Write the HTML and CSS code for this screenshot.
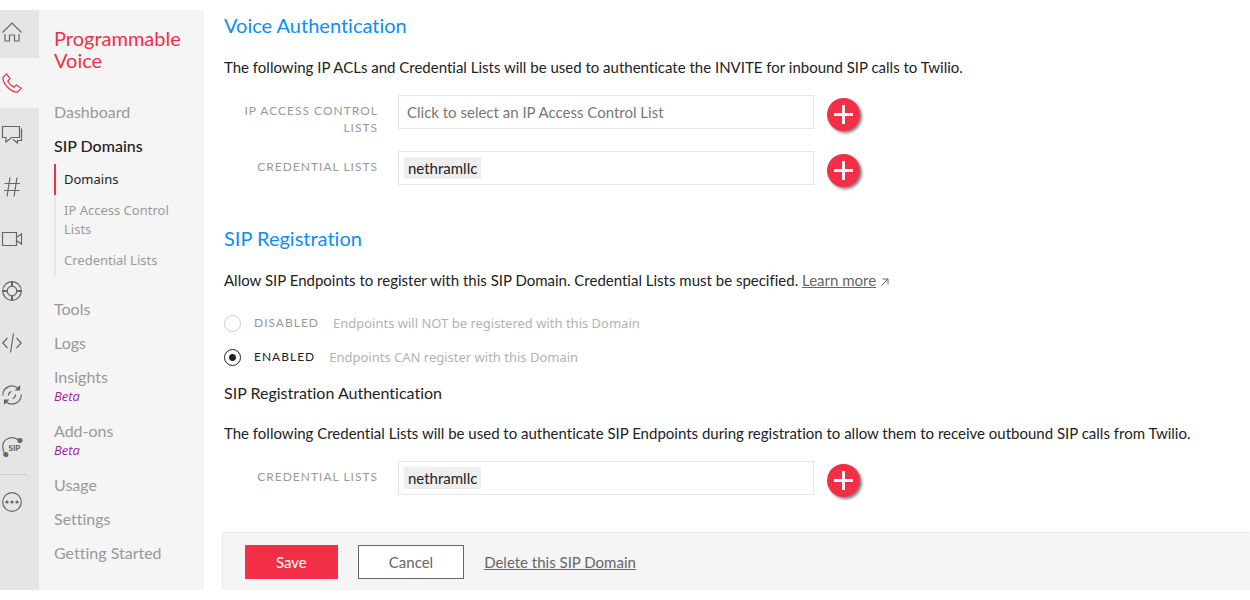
FILE: index.html
```html
<!DOCTYPE html>
<html lang="en">

<head>
    <meta charset="UTF-8">
    <meta name="viewport" content="width=device-width, initial-scale=1.0">
    <title>SIP Domains</title>
    <link rel="stylesheet" href="styles.css">
</head>

<body>
    <div class="container">
        <nav class="rail" aria-label="Products">
            <a href="#" class="home" aria-label="Home">
                <svg viewBox="0 0 20 20"><path d="M.5 10.500 10 1l9.500 9.500M3 12v7h4.500v-6h5v6H17v-7" /></svg>
            </a>
            <a href="#" class="active" aria-label="Programmable Voice">
                <svg viewBox="0 0 20 20"><path d="M4.500.8.800 4.500C1 11 8.500 19 15.500 19.200l3.700-3.900-4.800-3.300-2.600 2.200C9.500 13 7 10.500 5.800 8.200L8 5.600z" /></svg>
            </a>
            <a href="#" aria-label="Chat">
                <svg viewBox="0 0 20 20"><path d="M.5 1.500h17v11H9.500L4 17v-4.500H.5zM19.500 3.500v12h-4v2.500l-4.500-3.500" /></svg>
            </a>
            <a href="#" aria-label="Phone Numbers">
                <svg viewBox="0 0 20 20"><path d="M8 .5 5 19.500M15 .5l-3 19M2.500 6.500H18M2 13.500h15.500" /></svg>
            </a>
            <a href="#" aria-label="Video">
                <svg viewBox="0 0 20 20"><path d="M.5 3.500h14v13H.5zM14.500 8.500l5-3.500v10l-5-3.500" /></svg>
            </a>
            <a href="#" aria-label="Support">
                <svg viewBox="0 0 20 20"><circle cx="10" cy="10" r="9.300" /><circle cx="10" cy="10" r="4.800" /><path class="thick" d="M10 .7v4.500M10 14.800v4.500M.7 10h4.500M14.800 10h4.500" /></svg>
            </a>
            <a href="#" aria-label="Developer Tools">
                <svg viewBox="0 0 20 20"><path d="M5.500 5 .8 10l4.700 5M14.500 5l4.700 5-4.700 5M11.500.5l-3 19" /></svg>
            </a>
            <a href="#" aria-label="Sync">
                <svg viewBox="0 0 20 20">
                    <path d="M.8 10.500A9.200 9.200 0 0 1 16 3.200M19.200 9.500A9.200 9.200 0 0 1 4 16.800M6.500 10.500C6.500 8.500 7.500 7 9.500 6.500M13.500 9.500c0 2-1 3.500-3 4" />
                    <path class="fill" d="M17.500 1.500v3.500H14zM2.500 18.500V15H6z" />
                </svg>
            </a>
            <a href="#" aria-label="SIP Trunking">
                <svg viewBox="0 0 20 20">
                    <path d="M17.500 3.500C10-2.500.5 2 .7 10c0 3 1.300 5.500 3 7.300" />
                    <circle class="fill" cx="18" cy="3.500" r="2" />
                    <circle class="fill" cx="3.800" cy="17.500" r="2" />
                    <text x="6.500" y="14">SIP</text>
                </svg>
            </a>
            <hr>
            <a href="#" aria-label="All Products">
                <svg viewBox="0 0 20 20"><circle cx="10" cy="10" r="9.300" /><circle class="fill" cx="5" cy="10" r="1" /><circle class="fill" cx="10" cy="10" r="1" /><circle class="fill" cx="15" cy="10" r="1" /></svg>
            </a>
        </nav>

        <nav class="sidebar" aria-label="Programmable Voice">
            <h1>Programmable Voice</h1>
            <ul>
                <li><a href="#">Dashboard</a></li>
                <li>
                    <a href="#" class="current">SIP Domains</a>
                    <ul class="sub">
                        <li class="on"><a href="#">Domains</a></li>
                        <li><a href="#">IP Access Control Lists</a></li>
                        <li><a href="#">Credential Lists</a></li>
                    </ul>
                </li>
                <li><a href="#">Tools</a></li>
                <li><a href="#">Logs</a></li>
                <li><a href="#">Insights</a><em>Beta</em></li>
                <li><a href="#">Add-ons</a><em>Beta</em></li>
                <li><a href="#">Usage</a></li>
                <li><a href="#">Settings</a></li>
                <li><a href="#">Getting Started</a></li>
            </ul>
        </nav>

        <main>
            <form>
                <section>
                    <h2>Voice Authentication</h2>
                    <p>The following IP ACLs and Credential Lists will be used to authenticate the INVITE for inbound SIP calls to Twilio.</p>
                    <div class="row">
                        <label for="acl">IP Access Control Lists</label>
                        <div class="field"><input type="text" id="acl" placeholder="Click to select an IP Access Control List"></div>
                        <button type="button" class="add" aria-label="Add IP access control list"><svg viewBox="0 0 20 20"><path d="M10 0v20M0 10h20" /></svg></button>
                    </div>
                    <div class="row">
                        <label for="voiceCred">Credential Lists</label>
                        <div class="field"><span class="tag">nethramllc</span><input type="text" id="voiceCred"></div>
                        <button type="button" class="add" aria-label="Add credential list"><svg viewBox="0 0 20 20"><path d="M10 0v20M0 10h20" /></svg></button>
                    </div>
                </section>

                <section>
                    <h2>SIP Registration</h2>
                    <p>Allow SIP Endpoints to register with this SIP Domain. Credential Lists must be specified. <a href="#">Learn more</a> <svg class="ext" viewBox="0 0 8 8"><path d="M.5 7.500 7 1M1.500 1H7v5.500" /></svg></p>
                    <div class="radios">
                        <div class="radio">
                            <input type="radio" name="registration" id="disabled">
                            <label for="disabled">Disabled</label>
                            <span>Endpoints will NOT be registered with this Domain</span>
                        </div>
                        <div class="radio">
                            <input type="radio" name="registration" id="enabled" checked>
                            <label for="enabled">Enabled</label>
                            <span>Endpoints CAN register with this Domain</span>
                        </div>
                    </div>
                    <h3>SIP Registration Authentication</h3>
                    <p>The following Credential Lists will be used to authenticate SIP Endpoints during registration to allow them to receive outbound SIP calls from Twilio.</p>
                    <div class="row">
                        <label for="regCred">Credential Lists</label>
                        <div class="field"><span class="tag">nethramllc</span><input type="text" id="regCred"></div>
                        <button type="button" class="add" aria-label="Add credential list"><svg viewBox="0 0 20 20"><path d="M10 0v20M0 10h20" /></svg></button>
                    </div>
                </section>

                <div class="actions">
                    <button type="submit" class="save">Save</button>
                    <button type="button" class="cancel">Cancel</button>
                    <a href="#">Delete this SIP Domain</a>
                </div>
            </form>
        </main>
    </div>
</body>

</html>
```
FILE: styles.css
```css
* {
    box-sizing: border-box;
}

body {
    margin: 0;
    padding: 10px 0;
    font-family: Lato, "Open Sans", sans-serif;
    font-size: 15px;
    line-height: 20px;
    font-variant-ligatures: none;
    color: #222;
    background-color: #fff;
}

h1,
h2,
h3,
p,
ul {
    margin: 0;
    padding: 0;
    font-weight: 400;
}

ul {
    list-style: none;
}

input,
button {
    font: inherit;
}

.container {
    display: flex;
    min-height: calc(100vh - 20px);
}

/* icon rail */
.rail {
    flex: none;
    width: 39px;
    background-color: #e5e5e5;
}

.rail a {
    display: flex;
    align-items: center;
    height: 52px;
    padding-left: 2px;
    color: #666;
}

.rail .home {
    height: 48px;
    padding-bottom: 4px;
}

.rail .active {
    height: 50px;
    margin-bottom: 1px;
    color: #f22f46;
    background-color: #f5f5f5;
}

.rail hr {
    width: 27px;
    height: 1px;
    margin: 1px 0;
    border: 0;
    background-color: #ccc;
}

.rail svg {
    width: 20px;
    height: 20px;
    fill: none;
    stroke: currentColor;
    stroke-width: 1.2;
    overflow: visible;
}

.rail .thick {
    stroke-width: 2;
}

.rail .fill {
    fill: currentColor;
}

.rail text {
    font-size: 8px;
    font-weight: 900;
    fill: currentColor;
    stroke: none;
}

/* product menu */
.sidebar {
    flex: none;
    width: 165px;
    padding: 17px 15px;
    background-color: #f5f5f5;
}

.sidebar h1 {
    margin-bottom: 24px;
    font-size: 20px;
    line-height: 22px;
    color: #f22f46;
}

.sidebar a {
    display: block;
    font-size: 16px;
    line-height: 34px;
    text-decoration: none;
    color: #999;
}

.sidebar .current {
    font-weight: 500;
    color: #222;
}

.sidebar em {
    display: block;
    margin-top: -8px;
    padding-bottom: 8px;
    font-family: "Open Sans", sans-serif;
    font-size: 13px;
    font-weight: 500;
    color: #a120a8;
}

.sub {
    margin: 1px 0 16px;
}

.sub li {
    padding: 6px 0 6px 8px;
    border-left: 2px solid #e5e5e5;
}

.sub .on {
    border-color: #f22f46;
}

.sidebar .sub a {
    font-family: "Noto Sans", sans-serif;
    font-size: 13px;
    line-height: 19px;
}

.sidebar .on a {
    color: #222;
}

/* form */
main {
    flex: 1;
    min-width: 0;
    padding-left: 20px;
}

h2 {
    margin-bottom: 17px;
    font-size: 20px;
    line-height: 30px;
    color: #0d8dfa;
}

h3 {
    margin-bottom: 20px;
    font-size: 16px;
}

p {
    margin-bottom: 18px;
}

p a,
.actions a {
    color: #666;
}

.ext {
    width: 8px;
    height: 8px;
    margin-left: 1px;
    fill: none;
    stroke: #666;
}

section {
    margin-bottom: 38px;
}

.row {
    display: flex;
    align-items: flex-start;
    height: 34px;
}

.row + .row {
    margin-top: 22px;
}

.row label {
    width: 154px;
    margin-right: 20px;
    padding-top: 7px;
    font-size: 12px;
    line-height: 17px;
    letter-spacing: 1px;
    text-align: right;
    text-transform: uppercase;
    color: #999;
}

.field {
    display: flex;
    align-items: center;
    gap: 4px;
    width: 416px;
    height: 34px;
    padding: 0 5px;
    border: 1px solid #e5e5e5;
}

.field input {
    flex: 1;
    min-width: 0;
    padding: 0 3px;
    border: 0;
    outline: 0;
}

.field input::placeholder {
    color: #777;
}

.tag {
    padding: 1px 4px;
    background-color: #eee;
}

.add {
    display: flex;
    align-items: center;
    justify-content: center;
    width: 33px;
    height: 33px;
    margin: 3px 0 0 13px;
    padding: 0;
    border: 0;
    border-radius: 50%;
    background-color: #f22f46;
    box-shadow: 2px 2px 3px rgba(0, 0, 0, .5);
}

.add svg {
    width: 19px;
    height: 19px;
    stroke: #fff;
    stroke-width: 3;
}

.radios {
    margin: -2px 0 9px;
}

.radio {
    display: flex;
    align-items: center;
    height: 34px;
}

.radio input {
    appearance: none;
    width: 17px;
    height: 17px;
    margin: 0 13px 0 0;
    border: 1px solid #ccc;
    border-radius: 50%;
}

.radio input:checked {
    border-color: #222;
    background: radial-gradient(circle, #222 3px, #fff 4px);
}

.radio label {
    margin-right: 14px;
    font-size: 12px;
    letter-spacing: 1px;
    text-transform: uppercase;
    color: #999;
}

.radio span {
    font-family: "Noto Sans", sans-serif;
    font-size: 13px;
    color: #b2b2b2;
}

.radio input:checked + label {
    color: #222;
}

.actions {
    display: flex;
    align-items: center;
    gap: 20px;
    margin-left: -1px;
    padding: 12px 22px 11px;
    background-color: #f5f5f5;
    box-shadow: 0 0 2px rgba(0, 0, 0, .25);
    clip-path: inset(-3px 0 0 -3px);
}

.actions button {
    height: 34px;
    padding: 0 30px;
    border: 1px solid #f22f46;
    color: #fff;
    background-color: #f22f46;
}

.actions .cancel {
    border-color: #666;
    color: #666;
    background-color: #fff;
}
```
